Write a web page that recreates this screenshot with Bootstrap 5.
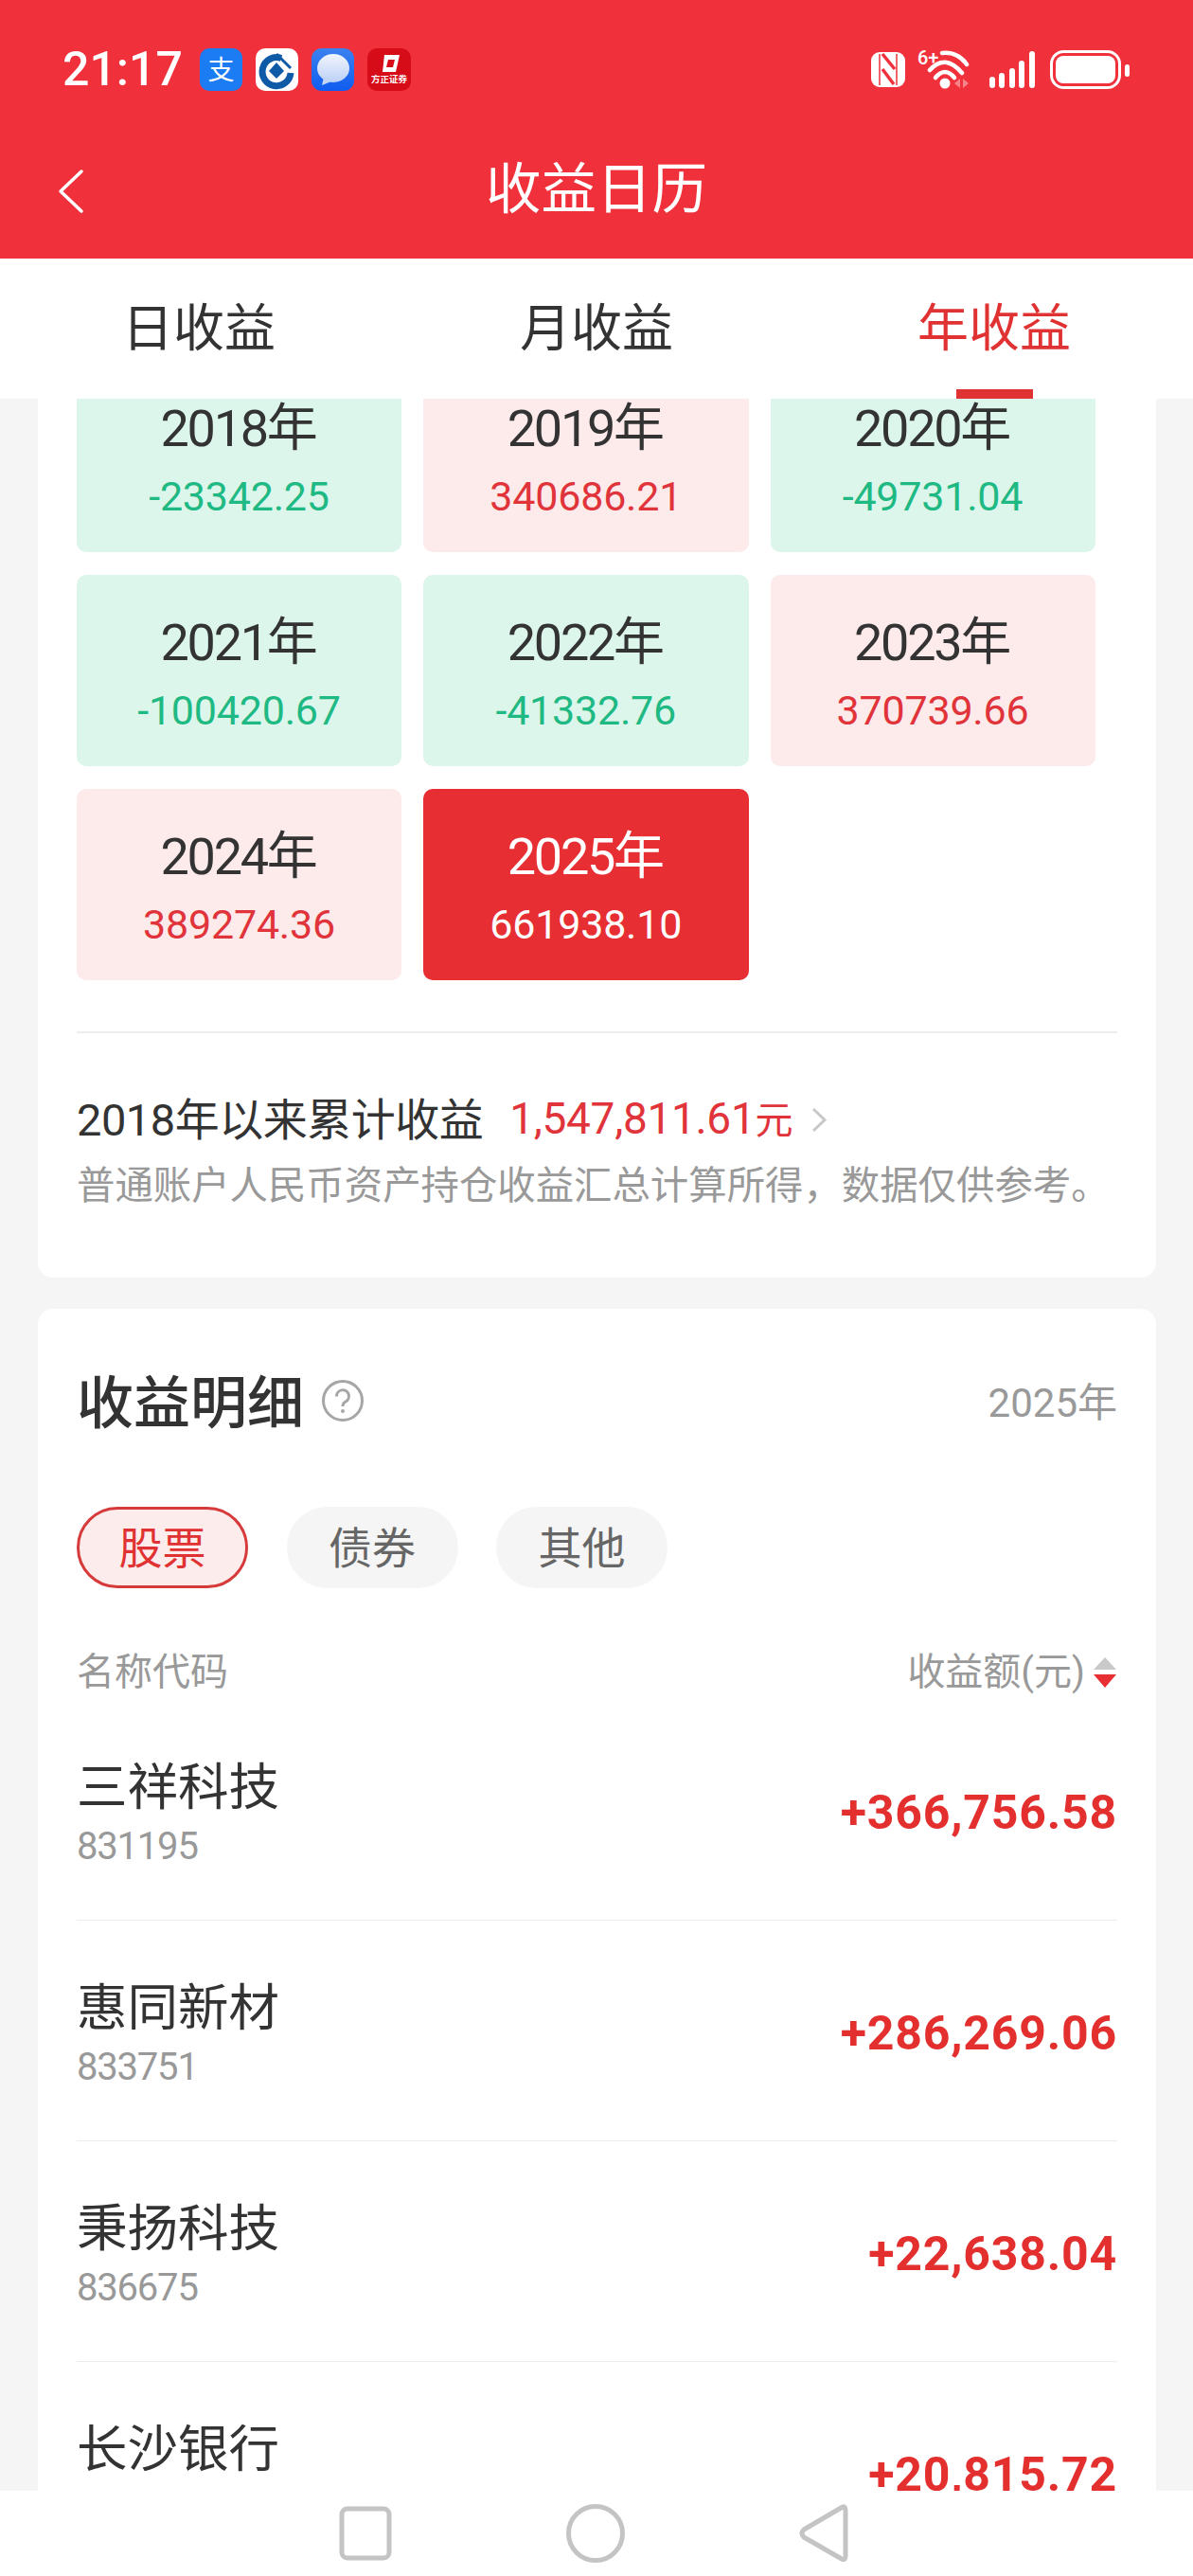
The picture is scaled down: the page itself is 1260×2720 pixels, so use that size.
<!doctype html>
<html lang="zh-CN">
<head>
<meta charset="utf-8">
<title>收益日历</title>
<link href="https://cdn.jsdelivr.net/npm/bootstrap@5.3.0/dist/css/bootstrap.min.css" rel="stylesheet">
<style>
html,body{height:2720px;}
body{font-family:Roboto,"Noto Sans CJK SC",sans-serif;background:#f5f5f5;color:#333;}
.app-shell{width:1260px;height:2720px;}
.app-head{background:#f0313b;height:273px;flex:none;color:#fff;}
.status-row{height:128px;padding:51px 66px 0 66px;}
.status-time{font-size:50px;line-height:45px;font-weight:500;width:145px;}
.notif-set{gap:14px;}
.status-right{margin-left:auto;margin-top:-5px;}
.app-title{height:145px;font-size:58.500px;line-height:145px;text-align:center;}
.back-arrow{position:absolute;left:61px;top:50px;}
.tabs-bar{flex:none;background:#fff;height:148px;}
.tab-cell{font-size:54px;line-height:150px;text-align:center;color:#333;height:148px;}
.tab-on{color:#e03232;}
.tab-on::after{content:"";position:absolute;left:50%;bottom:0;width:81px;height:10px;margin-left:-40px;background:#e03232;}
.scroll-area{min-height:0;}
.scroll-inner{margin-top:-40px;padding:0 39px 0 40px;}
.panel{border-radius:16px;background:#fff;border:0;}
.panel-one{padding:0 41px;height:968px;border-radius:0 0 16px 16px;}
.year-grid{display:grid;grid-template-columns:343px 343.500px 343px;gap:24px 23px;}
.year-tile{height:202px;border-radius:10px;text-align:center;padding-top:42px;}
.tile-up{background:#fdeaea;}
.tile-down{background:#dcf6ec;}
.tile-now{background:#e62e33;color:#fff;}
.tile-year{font-size:54px;line-height:60px;letter-spacing:-2.300px;margin-left:-2px;}
.tile-val{font-size:43px;line-height:50px;margin-top:16px;letter-spacing:-.200px;}
.tile-up .tile-val{color:#e0333a;}
.tile-down .tile-val{color:#1fb983;}
.rule-line{height:2px;background:#eee;margin-top:54px;}
.sum-row{margin-top:60px;font-size:47px;line-height:60px;letter-spacing:-.500px;}
.sum-val{color:#e0333a;margin-left:28px;font-size:46px;letter-spacing:-.300px;}
.sum-val i{font-style:normal;font-size:40px;}
.sum-chev{margin-left:20px;}
.sum-note{font-size:40.400px;line-height:50px;color:#999;margin-top:14px;white-space:nowrap;}
.panel-two{margin-top:33px;padding:0 41px;height:1400px;}
.detail-title{font-size:60px;line-height:70px;font-weight:500;margin-top:3px;}
.detail-head{padding-top:63px;height:133px;}
.help-icon{margin-left:18px;margin-top:11px;}
.detail-year{margin-left:auto;font-size:42px;color:#999;margin-top:5px;}
.pill-set{margin-top:76px;gap:40.500px;}
.pill-btn{width:181px;height:86px;border-radius:43px;background:#f5f5f5;color:#666;font-size:46px;line-height:77px;padding:3px 0 0;border:3px solid #f5f5f5;}
.pill-on{background:#fdecec;color:#e03232;border-color:#d63a3a;}
.col-head{margin-top:64px;font-size:40px;line-height:50px;color:#999;height:54px;}
.sort-mark{margin-left:8px;}
.stock-row{padding:61px 0 55px;border-bottom:2px solid #eee;background:transparent;}
.stock-name{font-size:53.500px;line-height:64px;color:#333;}
.stock-code{font-size:40px;line-height:44px;height:44px;color:#999;margin-top:8px;letter-spacing:-1.200px;}
.stock-amt{margin-left:auto;font-size:50px;line-height:60px;font-weight:700;color:#e3302f;letter-spacing:.800px;}
.bottom-nav{height:90px;flex:none;background:#fff;gap:184px;padding-right:6px;}
</style>
</head>
<body class="overflow-hidden">
<div class="app-shell d-flex flex-column overflow-hidden">
  <header class="app-head">
    <div class="status-row d-flex align-items-start">
      <div class="status-time">21:17</div>
      <div class="notif-set d-flex">
        <svg width="45" height="45" viewBox="0 0 45 45"><rect width="45" height="45" rx="10" fill="#1b7cf3"/><text x="22.500" y="33" text-anchor="middle" font-size="28" font-family="Noto Sans CJK SC" font-weight="400" fill="#fff">支</text></svg>
        <svg width="45" height="45" viewBox="0 0 45 45"><rect width="45" height="45" rx="10" fill="#fff"/><path d="M27 10.500A15 15 0 1 0 37 26" fill="none" stroke="#0f5aa6" stroke-width="7"/><path d="M22 15 30 24 22 32 14 24Z" fill="#0f5aa6"/><path d="M22 6 37 21" stroke="#0f5aa6" stroke-width="3" fill="none"/></svg>
        <svg width="45" height="45" viewBox="0 0 45 45"><defs><linearGradient id="mb" x1="0" y1="0" x2="0" y2="1"><stop offset="0" stop-color="#3b82ee"/><stop offset="1" stop-color="#0f5cf0"/></linearGradient><linearGradient id="mw" x1="0" y1="0" x2="0" y2="1"><stop offset="0" stop-color="#f1f5fd"/><stop offset="1" stop-color="#bcd0f6"/></linearGradient></defs><rect width="45" height="45" rx="11" fill="url(#mb)"/><ellipse cx="23" cy="21" rx="17" ry="15" fill="url(#mw)"/><path d="M13 30 11 39 21 35Z" fill="#c3d5f7"/></svg>
        <svg width="46" height="45" viewBox="0 0 46 45"><rect width="46" height="45" rx="10" fill="#d60d19"/><path d="M18 7H34L30 25H16ZM22 12 20 20H27L29 12Z" fill="#fff" fill-rule="evenodd"/><text x="23" y="36" text-anchor="middle" font-size="9.500" font-weight="700" font-family="Noto Sans CJK SC" fill="#fff">方正证券</text></svg>
      </div>
      <div class="status-right d-flex">
        <svg width="274" height="50" viewBox="0 -4 274 50">
          <rect x="0" y="5" width="36" height="37" rx="9" fill="#fff"/>
          <path d="M9 7V40M27 7V40" stroke="#f0313b" stroke-width="1.500"/>
          <path d="M12 7 25 23M12 23 24 39" stroke="#f0313b" stroke-width="3.500" fill="none"/>
          <text x="49" y="18" font-size="20" font-weight="500" fill="#fff">6+</text>
          <g fill="none" stroke="#fff" stroke-width="4.500" stroke-linecap="round"><path d="M75 6Q91 4 101 18"/><path d="M62 24Q78 6 96 27"/><path d="M68 32Q78 20 88 32"/></g>
          <circle cx="78" cy="38" r="5.500" fill="#fff"/>
          <path d="M88 38 94 33V43ZM103 38 97 33V43Z" fill="#fff" opacity=".4"/>
          <g stroke="#fff" stroke-width="6" stroke-linecap="round"><path d="M128 34V40M138 30V40M149 25V40M159 17V40M170 7V40"/></g>
          <rect x="190.500" y="4.500" width="72" height="38" rx="13" fill="none" stroke="#fff" stroke-width="3"/>
          <rect x="195" y="9" width="63" height="29" rx="8" fill="#fff"/>
          <rect x="268" y="18" width="5" height="13" rx="2.500" fill="#fff"/>
        </svg>
      </div>
    </div>
    <div class="app-title position-relative">
      <svg class="back-arrow" width="28" height="48" viewBox="0 0 28 48"><path d="M25 3 3 24 25 45" fill="none" stroke="#fff" stroke-width="3.500" stroke-linecap="round" stroke-linejoin="round"/></svg>
      收益日历
    </div>
  </header>
  <nav class="tabs-bar row g-0">
    <div class="col-4 tab-cell">日收益</div>
    <div class="col-4 tab-cell">月收益</div>
    <div class="col-4 tab-cell tab-on position-relative">年收益</div>
  </nav>
  <main class="scroll-area flex-fill overflow-hidden">
    <div class="scroll-inner">
      <section class="card panel panel-one">
        <div class="year-grid">
          <div class="year-tile tile-down"><div class="tile-year">2018年</div><div class="tile-val">-23342.25</div></div>
          <div class="year-tile tile-up"><div class="tile-year">2019年</div><div class="tile-val">340686.21</div></div>
          <div class="year-tile tile-down"><div class="tile-year">2020年</div><div class="tile-val">-49731.04</div></div>
          <div class="year-tile tile-down"><div class="tile-year">2021年</div><div class="tile-val">-100420.67</div></div>
          <div class="year-tile tile-down"><div class="tile-year">2022年</div><div class="tile-val">-41332.76</div></div>
          <div class="year-tile tile-up"><div class="tile-year">2023年</div><div class="tile-val">370739.66</div></div>
          <div class="year-tile tile-up"><div class="tile-year">2024年</div><div class="tile-val">389274.36</div></div>
          <div class="year-tile tile-now"><div class="tile-year">2025年</div><div class="tile-val">661938.10</div></div>
        </div>
        <div class="rule-line"></div>
        <div class="sum-row d-flex align-items-center">
          <span>2018年以来累计收益</span>
          <span class="sum-val">1,547,811.61<i>元</i></span>
          <svg class="sum-chev" width="17" height="27" viewBox="0 0 17 27"><path d="M2 2 14 13.500 2 25" fill="none" stroke="#c8c8c8" stroke-width="3"/></svg>
        </div>
        <div class="sum-note">普通账户人民币资产持仓收益汇总计算所得，数据仅供参考。</div>
      </section>
      <section class="card panel panel-two">
        <div class="detail-head d-flex align-items-start">
          <span class="detail-title">收益明细</span>
          <svg class="help-icon" width="46" height="46" viewBox="0 0 46 46"><circle cx="23" cy="23" r="20.500" fill="none" stroke="#a6a6a6" stroke-width="3"/><path d="M16.500 18.500A6.500 6.500 0 1 1 26 24Q23 25.500 23 29" fill="none" stroke="#a6a6a6" stroke-width="3"/><circle cx="23" cy="34" r="2" fill="#a6a6a6"/></svg>
          <span class="detail-year">2025年</span>
        </div>
        <div class="pill-set d-flex">
          <button type="button" class="btn pill-btn pill-on">股票</button>
          <button type="button" class="btn pill-btn">债券</button>
          <button type="button" class="btn pill-btn">其他</button>
        </div>
        <div class="col-head d-flex justify-content-between align-items-start">
          <span>名称代码</span>
          <span class="d-flex align-items-center">收益额(元)<svg class="sort-mark" width="26" height="34" viewBox="0 0 26 34"><path d="M13 1 25 14H1Z" fill="#c9c9c9"/><path d="M13 33 25 19H1Z" fill="#e62e33"/></svg></span>
        </div>
        <div class="list-group list-group-flush">
          <div class="list-group-item stock-row d-flex align-items-center px-0"><div><div class="stock-name">三祥科技</div><div class="stock-code">831195</div></div><div class="stock-amt">+366,756.58</div></div>
          <div class="list-group-item stock-row d-flex align-items-center px-0"><div><div class="stock-name">惠同新材</div><div class="stock-code">833751</div></div><div class="stock-amt">+286,269.06</div></div>
          <div class="list-group-item stock-row d-flex align-items-center px-0"><div><div class="stock-name">秉扬科技</div><div class="stock-code">836675</div></div><div class="stock-amt">+22,638.04</div></div>
          <div class="list-group-item stock-row d-flex align-items-center px-0"><div><div class="stock-name">长沙银行</div><div class="stock-code"></div></div><div class="stock-amt">+20,815.72</div></div>
        </div>
      </section>
    </div>
  </main>
  <footer class="bottom-nav d-flex align-items-center justify-content-center">
    <svg width="56" height="58" viewBox="0 0 56 58"><rect x="3" y="3" width="50" height="52" rx="6" fill="none" stroke="#c4c4c4" stroke-width="5"/></svg>
    <svg width="62" height="62" viewBox="0 0 62 62"><circle cx="31" cy="31" r="28.500" fill="none" stroke="#c4c4c4" stroke-width="5"/></svg>
    <svg width="52" height="64" viewBox="0 0 52 64"><path d="M46 4Q49 3 49 8V56Q49 61 45 59L5 36Q1 32 5 28Z" fill="none" stroke="#c4c4c4" stroke-width="5" stroke-linejoin="round"/></svg>
  </footer>
</div>
<script src="https://cdn.jsdelivr.net/npm/bootstrap@5.3.0/dist/js/bootstrap.bundle.min.js"></script>
</body>
</html>
